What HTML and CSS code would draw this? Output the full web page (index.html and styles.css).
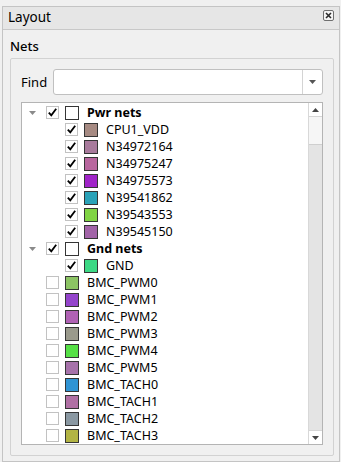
FILE: index.html
```html
<!DOCTYPE html>
<html>
<head>
<meta charset="utf-8">
<link rel="stylesheet" href="styles.css">
</head>
<body>
<div class="panel">
  <div class="titlebar">
    <span class="title">Layout</span>
    <span class="close"><svg width="11" height="11" viewBox="0 0 11 11"><rect x="0.5" y="0.5" width="10" height="10" rx="1.5" fill="#f4f4f4" stroke="#6e6e6e"/><path d="M3 3 L8 8 M8 3 L3 8" stroke="#2a2a2a" stroke-width="1.6"/></svg></span>
  </div>
  <div class="content">
    <div class="section-label">Nets</div>
    <div class="group">
      <div class="find-row">
        <span class="find-label">Find</span>
        <div class="combo">
          <div class="combo-input"></div>
          <div class="combo-btn"><svg width="7" height="4" viewBox="0 0 7 4"><path d="M0 0 L7 0 L3.5 4 Z" fill="#555"/></svg></div>
        </div>
      </div>
      <div class="tree">
        <div class="rows">
          <div class="row"><span class="branch"><svg width="7" height="4" viewBox="0 0 7 4"><path d="M0 0 L7 0 L3.5 4 Z" fill="#8a8a8a"/></svg></span><span class="cb"><svg width="11" height="11" viewBox="0 0 11 11"><path d="M1.8 5.6 L4.3 8.4 L9.2 1.8" fill="none" stroke="#000" stroke-width="1.8"/></svg></span><span class="sw" style="background:#ffffff"></span><span class="label bold">Pwr nets</span></div>
          <div class="row child"><span class="branch"></span><span class="cb"><svg width="11" height="11" viewBox="0 0 11 11"><path d="M1.8 5.6 L4.3 8.4 L9.2 1.8" fill="none" stroke="#000" stroke-width="1.8"/></svg></span><span class="sw" style="background:#a68a82"></span><span class="label">CPU1_VDD</span></div>
          <div class="row child"><span class="branch"></span><span class="cb"><svg width="11" height="11" viewBox="0 0 11 11"><path d="M1.8 5.6 L4.3 8.4 L9.2 1.8" fill="none" stroke="#000" stroke-width="1.8"/></svg></span><span class="sw" style="background:#a87a9c"></span><span class="label">N34972164</span></div>
          <div class="row child"><span class="branch"></span><span class="cb"><svg width="11" height="11" viewBox="0 0 11 11"><path d="M1.8 5.6 L4.3 8.4 L9.2 1.8" fill="none" stroke="#000" stroke-width="1.8"/></svg></span><span class="sw" style="background:#b8669e"></span><span class="label">N34975247</span></div>
          <div class="row child"><span class="branch"></span><span class="cb"><svg width="11" height="11" viewBox="0 0 11 11"><path d="M1.8 5.6 L4.3 8.4 L9.2 1.8" fill="none" stroke="#000" stroke-width="1.8"/></svg></span><span class="sw" style="background:#a024c8"></span><span class="label">N34975573</span></div>
          <div class="row child"><span class="branch"></span><span class="cb"><svg width="11" height="11" viewBox="0 0 11 11"><path d="M1.8 5.6 L4.3 8.4 L9.2 1.8" fill="none" stroke="#000" stroke-width="1.8"/></svg></span><span class="sw" style="background:#2aa2b8"></span><span class="label">N39541862</span></div>
          <div class="row child"><span class="branch"></span><span class="cb"><svg width="11" height="11" viewBox="0 0 11 11"><path d="M1.8 5.6 L4.3 8.4 L9.2 1.8" fill="none" stroke="#000" stroke-width="1.8"/></svg></span><span class="sw" style="background:#80d444"></span><span class="label">N39543553</span></div>
          <div class="row child"><span class="branch"></span><span class="cb"><svg width="11" height="11" viewBox="0 0 11 11"><path d="M1.8 5.6 L4.3 8.4 L9.2 1.8" fill="none" stroke="#000" stroke-width="1.8"/></svg></span><span class="sw" style="background:#a264a8"></span><span class="label">N39545150</span></div>
          <div class="row"><span class="branch"><svg width="7" height="4" viewBox="0 0 7 4"><path d="M0 0 L7 0 L3.5 4 Z" fill="#8a8a8a"/></svg></span><span class="cb"><svg width="11" height="11" viewBox="0 0 11 11"><path d="M1.8 5.6 L4.3 8.4 L9.2 1.8" fill="none" stroke="#000" stroke-width="1.8"/></svg></span><span class="sw" style="background:#ffffff"></span><span class="label bold">Gnd nets</span></div>
          <div class="row child"><span class="branch"></span><span class="cb"><svg width="11" height="11" viewBox="0 0 11 11"><path d="M1.8 5.6 L4.3 8.4 L9.2 1.8" fill="none" stroke="#000" stroke-width="1.8"/></svg></span><span class="sw" style="background:#3cd884"></span><span class="label">GND</span></div>
          <div class="row"><span class="branch"></span><span class="cb"></span><span class="sw" style="background:#8cc464"></span><span class="label">BMC_PWM0</span></div>
          <div class="row"><span class="branch"></span><span class="cb"></span><span class="sw" style="background:#9444cc"></span><span class="label">BMC_PWM1</span></div>
          <div class="row"><span class="branch"></span><span class="cb"></span><span class="sw" style="background:#b062b4"></span><span class="label">BMC_PWM2</span></div>
          <div class="row"><span class="branch"></span><span class="cb"></span><span class="sw" style="background:#9a9a8c"></span><span class="label">BMC_PWM3</span></div>
          <div class="row"><span class="branch"></span><span class="cb"></span><span class="sw" style="background:#56e046"></span><span class="label">BMC_PWM4</span></div>
          <div class="row"><span class="branch"></span><span class="cb"></span><span class="sw" style="background:#a672aa"></span><span class="label">BMC_PWM5</span></div>
          <div class="row"><span class="branch"></span><span class="cb"></span><span class="sw" style="background:#3094d4"></span><span class="label">BMC_TACH0</span></div>
          <div class="row"><span class="branch"></span><span class="cb"></span><span class="sw" style="background:#b070a4"></span><span class="label">BMC_TACH1</span></div>
          <div class="row"><span class="branch"></span><span class="cb"></span><span class="sw" style="background:#8a98a2"></span><span class="label">BMC_TACH2</span></div>
          <div class="row"><span class="branch"></span><span class="cb"></span><span class="sw" style="background:#b2b444"></span><span class="label">BMC_TACH3</span></div>
        </div>
        <div class="vscroll">
          <div class="sb-btn"><svg width="7" height="4" viewBox="0 0 7 4"><path d="M0 4 L7 4 L3.5 0 Z" fill="#444"/></svg></div>
          <div class="sb-track">
            <div class="sb-thumb"></div>
          </div>
          <div class="sb-btn"><svg width="7" height="4" viewBox="0 0 7 4"><path d="M0 0 L7 0 L3.5 4 Z" fill="#444"/></svg></div>
        </div>
      </div>
    </div>
  </div>
</div>
</body>
</html>
```
FILE: styles.css
```css
* { box-sizing: border-box; margin: 0; padding: 0; }
html, body { background: #f0f0f0; }
body {
  width: 341px;
  height: 462px;
  overflow: hidden;
  font-family: "Noto Sans", "Open Sans", sans-serif;
  font-size: 12.5px;
  color: #000;
}
.panel {
  margin: 6px 0 0 2px;
  width: 338px;
  height: 456px;
  border: 1px solid #c4c4c4;
  background: #f0f0f0;
  display: flex;
  flex-direction: column;
}
.titlebar {
  height: 23px;
  flex: none;
  background: #e6e6e6;
  border-bottom: 1px solid #c8c8c8;
  display: flex;
  align-items: flex-start;
  justify-content: space-between;
  padding: 0 5px 0 5px;
}
.title { line-height: 20px; font-size: 13.5px; }
.close { display: flex; margin-top: 3px; }
.content {
  flex: 1;
  display: flex;
  flex-direction: column;
  padding: 0 5px 5px 7px;
}
.section-label {
  padding-top: 7px;
  line-height: 18px;
  margin-bottom: 3px;
  font-size: 13px;
  font-weight: 500;
}
.group {
  flex: 1;
  border: 1px solid #d2d2d2;
  border-radius: 2px;
  padding: 10px;
  display: flex;
  flex-direction: column;
  gap: 7px;
}
.find-row {
  display: flex;
  align-items: center;
  height: 26px;
  flex: none;
}
.find-label { width: 32px; line-height: 18px; font-size: 13px; }
.combo {
  flex: 1;
  height: 26px;
  border: 1px solid #c0c0c0;
  border-radius: 3px;
  background: #fff;
  display: flex;
}
.combo-input { flex: 1; }
.combo-btn {
  width: 20px;
  border-left: 1px solid #d4d4d4;
  display: flex;
  align-items: center;
  justify-content: center;
}
.tree {
  flex: 1;
  border: 1px solid #b4b4b4;
  background: #fff;
  display: flex;
  overflow: hidden;
}
.rows {
  flex: 1;
  padding-top: 1px;
  overflow: hidden;
}
.row {
  height: 17px;
  display: flex;
  align-items: center;
  white-space: nowrap;
}
.row.child { padding-left: 19px; }
.branch {
  width: 24px;
  flex: none;
  display: flex;
  align-items: center;
  padding-left: 7px;
}
.cb {
  width: 13px;
  height: 13px;
  flex: none;
  border: 1px solid #c2c2c2;
  background: #fff;
  display: flex;
}
.sw {
  width: 14px;
  height: 14px;
  flex: none;
  border: 1px solid #353535;
  margin-left: 6px;
}
.label { margin-left: 8px; line-height: 17px; }
.bold { font-weight: 700; }
.vscroll {
  width: 14px;
  flex: none;
  display: flex;
  flex-direction: column;
  border-left: 1px solid #d8d8d8;
  background: #fff;
}
.sb-btn {
  height: 13px;
  flex: none;
  display: flex;
  align-items: center;
  justify-content: center;
  background: #fff;
}
.sb-track {
  flex: 1;
  background: #e4e4e4;
  border-top: 1px solid #d6d6d6;
  border-bottom: 1px solid #d6d6d6;
}
.sb-thumb {
  height: 28px;
  background: #f6f6f6;
  border-bottom: 1px solid #cfcfcf;
}
```
